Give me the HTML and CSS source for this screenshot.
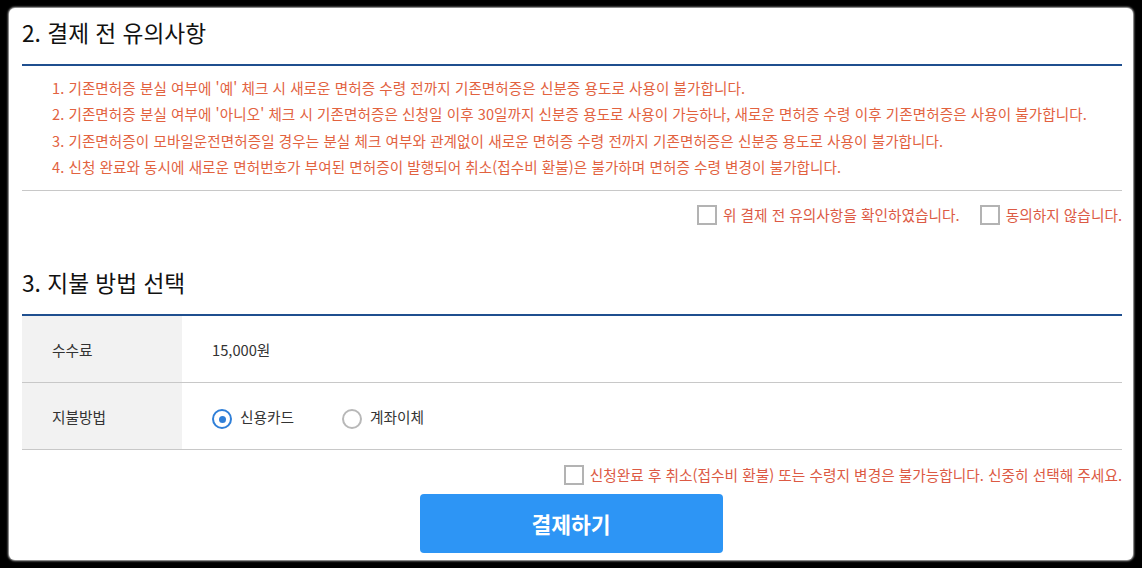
FILE: index.html
```html
<!DOCTYPE html>
<html lang="ko">
<head>
    <meta charset="UTF-8">
    <meta name="viewport" content="width=device-width, initial-scale=1.0">
    <title>결제 전 유의사항</title>
    <link rel="stylesheet" href="styles.css">
</head>
<body>
    <div class="panel">
        <h2 class="section-title">2. 결제 전 유의사항</h2>
        <div class="notice-box">
            <ol class="notice-list">
                <li>1. 기존면허증 분실 여부에 '예' 체크 시 새로운 면허증 수령 전까지 기존면허증은 신분증 용도로 사용이 불가합니다.</li>
                <li>2. 기존면허증 분실 여부에 '아니오' 체크 시 기존면허증은 신청일 이후 30일까지 신분증 용도로 사용이 가능하나, 새로운 면허증 수령 이후 기존면허증은 사용이 불가합니다.</li>
                <li>3. 기존면허증이 모바일운전면허증일 경우는 분실 체크 여부와 관계없이 새로운 면허증 수령 전까지 기존면허증은 신분증 용도로 사용이 불가합니다.</li>
                <li>4. 신청 완료와 동시에 새로운 면허번호가 부여된 면허증이 발행되어 취소(접수비 환불)은 불가하며 면허증 수령 변경이 불가합니다.</li>
            </ol>
        </div>
        <div class="agree-row">
            <label class="check"><span class="box"></span>위 결제 전 유의사항을 확인하였습니다.</label>
            <label class="check"><span class="box"></span>동의하지 않습니다.</label>
        </div>

        <h2 class="section-title second">3. 지불 방법 선택</h2>
        <div class="pay-table">
            <div class="pay-row">
                <div class="pay-label">수수료</div>
                <div class="pay-value">15,000원</div>
            </div>
            <div class="pay-row">
                <div class="pay-label">지불방법</div>
                <div class="pay-value radios">
                    <label class="radio"><span class="dot checked"></span>신용카드</label>
                    <label class="radio"><span class="dot"></span>계좌이체</label>
                </div>
            </div>
        </div>
        <div class="agree-row final">
            <label class="check"><span class="box"></span>신청완료 후 취소(접수비 환불) 또는 수령지 변경은 불가능합니다. 신중히 선택해 주세요.</label>
        </div>
        <div class="actions">
            <button class="pay-btn">결제하기</button>
        </div>
    </div>
</body>
</html>
```

FILE: styles.css
```css
body {
    margin: 0;
    padding: 8px 9px 8px 9px;
    background: #000;
    font-family: "Noto Sans CJK KR", "Noto Sans", sans-serif;
    color: #222;
}
.panel {
    background: #fff;
    border-radius: 6px;
    box-shadow: 0 0 2px 1px #bbb;
    height: 552px;
    box-sizing: border-box;
    padding: 10px 11px 0 13px;
}
.section-title {
    margin: 0;
    font-size: 22.7px;
    font-weight: 400;
    line-height: 30px;
    color: #111;
    margin-bottom: 16px;
}
.section-title.second {
    margin-top: 43px;
    margin-bottom: 16px;
}
.notice-box {
    border-top: 2px solid #1f4f8f;
    border-bottom: 1px solid #c8c8c8;
    padding: 9px 0 10px 30px;
}
.notice-list {
    list-style: none;
    margin: 0;
    padding: 0;
}
.notice-list li {
    font-size: 14.6px;
    line-height: 26.3px;
    color: #e2623f;
    letter-spacing: 0.05px;
}
.agree-row {
    display: flex;
    justify-content: flex-end;
    gap: 20px;
    padding-top: 14px;
}
.check {
    display: flex;
    align-items: center;
    gap: 6px;
    font-size: 14.7px;
    color: #dc5a44;
    line-height: 20px;
}
.box {
    width: 16px;
    height: 16px;
    border: 2px solid #b3b3b3;
    background: #fff;
    flex-shrink: 0;
}
.pay-table {
    border-top: 2px solid #1f4f8f;
}
.pay-row {
    display: flex;
    border-bottom: 1px solid #c8c8c8;
    height: 66px;
}
.pay-label {
    width: 130px;
    padding-left: 30px;
    background: #f2f2f2;
    display: flex;
    align-items: center;
    font-size: 14.7px;
    color: #333;
}
.pay-value {
    display: flex;
    align-items: center;
    padding-left: 30px;
    font-size: 14.7px;
    color: #333;
}
.radios {
    gap: 48px;
}
.radio {
    display: flex;
    align-items: center;
    gap: 8px;
}
.dot {
    width: 16px;
    height: 16px;
    border: 2px solid #b8b8b8;
    border-radius: 50%;
    position: relative;
    margin-top: 6px;
}
.dot.checked {
    border-color: #2f7fd8;
}
.dot.checked::after {
    content: "";
    position: absolute;
    left: 4.5px;
    top: 4.5px;
    width: 7px;
    height: 7px;
    border-radius: 50%;
    background: #2f7fd8;
}
.agree-row.final {
    padding-top: 15px;
}
.actions {
    display: flex;
    justify-content: center;
    padding-top: 9px;
}
.pay-btn {
    width: 303px;
    height: 59px;
    border: none;
    border-radius: 4px;
    background: #2d95f5;
    color: #fff;
    font-family: inherit;
    font-size: 21.5px;
    font-weight: 700;
    margin-right: 2px;
}
```
